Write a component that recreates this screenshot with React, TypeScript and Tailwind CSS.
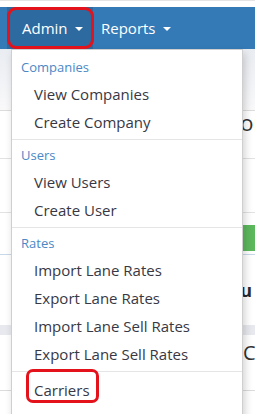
import React from 'react';

type Entry =
  | { kind: 'header'; label: string }
  | { kind: 'item'; label: string }
  | { kind: 'divider' };

const menu: Entry[] = [
  { kind: 'header', label: 'Companies' },
  { kind: 'item', label: 'View Companies' },
  { kind: 'item', label: 'Create Company' },
  { kind: 'divider' },
  { kind: 'header', label: 'Users' },
  { kind: 'item', label: 'View Users' },
  { kind: 'item', label: 'Create User' },
  { kind: 'divider' },
  { kind: 'header', label: 'Rates' },
  { kind: 'item', label: 'Import Lane Rates' },
  { kind: 'item', label: 'Export Lane Rates' },
  { kind: 'item', label: 'Import Lane Sell Rates' },
  { kind: 'item', label: 'Export Lane Sell Rates' },
  { kind: 'divider' },
  { kind: 'item', label: 'Carriers' },
  { kind: 'item', label: 'Carrier Accounts' },
];

function Caret() {
  return (
    <span className="ml-[7px] inline-block w-0 h-0 border-t-[4px] border-t-white border-x-[4px] border-x-transparent translate-y-[1px]" />
  );
}

export default function App() {
  return (
    <div className="relative w-[255px] h-[414px] overflow-hidden bg-white font-['Open_Sans',sans-serif]">
      {/* top strip */}
      <div className="h-[7px] bg-white border-t border-[#e4e4e4]" />

      {/* navbar */}
      <nav className="h-[42px] bg-[#347ab6] flex text-white text-[15px]">
        <div className="ml-[7px] w-[86px] flex items-center pl-[15px] bg-[#2c6a9f]">
          Admin
          <Caret />
        </div>
        <div className="flex items-center pl-[8px]">
          Reports
          <Caret />
        </div>
      </nav>

      {/* page content behind the menu */}
      <main className="text-[#333]">
        <div className="h-[62px] bg-gradient-to-b from-[#e9ecf1] to-[#f9f9fa] border-b border-[#dcdcdc]" />
        <div className="h-[48px] border-b border-[#e2e2e2] flex justify-end overflow-hidden">
          <span className="text-[22px] leading-[22px] whitespace-nowrap mr-[-12px]">Information</span>
        </div>
        <div className="h-[54px] border-b border-[#e2e2e2]" />
        <div className="h-[42px] border-b border-[#c9d8e8] flex justify-end">
          <div className="mt-[12px] h-[26px] w-[13px] bg-[#5cb85c]" />
        </div>
        <div className="h-[70px] flex justify-end items-center overflow-hidden">
          <span className="text-[18px] font-bold whitespace-nowrap mr-[3px] text-[#2b2b2b]">Menu</span>
        </div>
        <div className="h-[10px] bg-[#e7e9ef]" />
        <div className="h-[56px] border-b border-[#dcdcdc] flex items-start overflow-hidden">
          <span className="mt-[7px] pl-[243px] text-[20px] leading-[22px] whitespace-nowrap">Contacts</span>
        </div>
      </main>

      {/* dropdown menu */}
      <div className="absolute left-[11px] top-[49px] w-[232px] bg-white border border-[#cfcfcf] shadow-[2px_4px_8px_rgba(0,0,0,0.18)] pt-[6px]">
        {menu.map((e, i) => {
          if (e.kind === 'divider') {
            return <div key={i} className="mt-[3px] mb-[4px] h-px bg-[#e5e5e5]" />;
          }
          if (e.kind === 'header') {
            return (
              <div key={i} className="h-[24px] flex items-center pl-[9px] text-[13px] text-[#4a88c6]">
                {e.label}
              </div>
            );
          }
          return (
            <div key={i} className="h-[28px] flex items-center pl-[22px] text-[15px] text-[#383844] whitespace-nowrap">
              {e.label}
            </div>
          );
        })}
      </div>

      {/* red highlight boxes */}
      <div className="absolute left-[7px] top-[7px] w-[87px] h-[42px] border-[3px] border-[#e3121b] rounded-[9px]" />
      <div className="absolute left-[26px] top-[369px] w-[73px] h-[34px] border-[3px] border-[#e3121b] rounded-[7px]" />
    </div>
  );
}
